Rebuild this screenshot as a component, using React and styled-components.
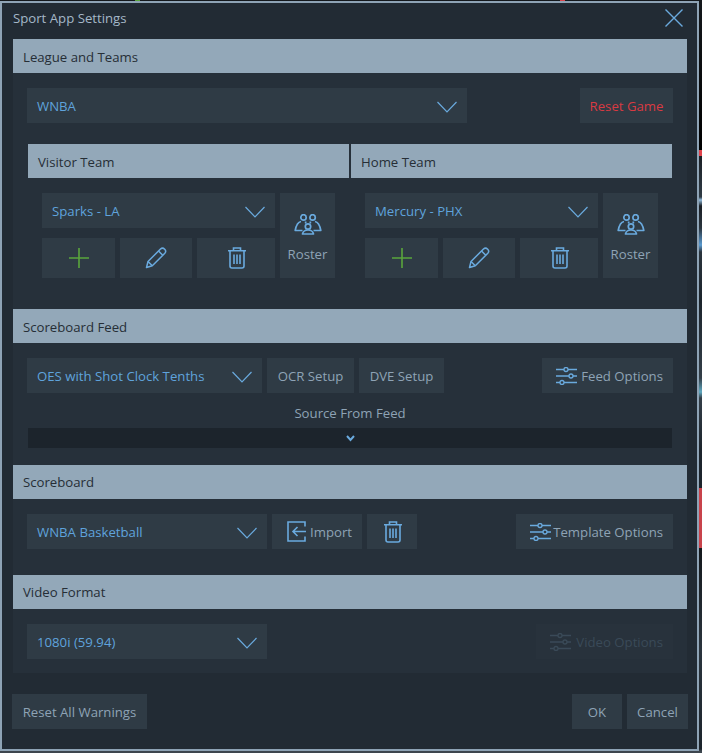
import styled, { createGlobalStyle } from "styled-components";

const GlobalStyle = createGlobalStyle`
  html, body { margin: 0; padding: 0; background: #1b2026; }
  * { box-sizing: border-box; }
`;

// the bits of desktop peeking out around the dialog
const Page = styled.div`
  width: 702px;
  height: 753px;
  overflow: hidden;
  padding-top: 1px;
  font-family: "Open Sans", "Liberation Sans", sans-serif;
  font-size: 13.2px;
  background:
    linear-gradient(
        to right,
        transparent 135px,
        #5aa63c 135px,
        #5aa63c 140px,
        transparent 140px,
        transparent 560px,
        #d9454c 560px,
        #d9454c 565px,
        transparent 565px
      )
      0 0 / 100% 1px no-repeat,
    linear-gradient(
      to bottom,
      #14181c 0,
      #000 150px,
      #e0434b 150px,
      #e0434b 156px,
      #1b2026 156px,
      #2f3b45 197px,
      #8fb8d8 200px,
      #1b2026 206px,
      #2a343d 228px,
      #5a9ad0 245px,
      #2a343d 252px,
      #1c242c 300px,
      #333e48 378px,
      #5fa8c0 392px,
      #333e48 398px,
      #1c242c 450px,
      #1c242c 488px,
      #c8434b 488px,
      #c8434b 548px,
      #14181c 548px,
      #2a343d 650px,
      #1c242c 749px,
      #3d464e 751px
    );
`;

const Dialog = styled.div`
  width: 699px;
  height: 750px;
  background: #222b34;
  border: 2px solid #8ea3b5;
  padding: 0 11px;
  display: flex;
  flex-direction: column;
`;

const TitleBar = styled.div`
  height: 36px;
  display: flex;
  justify-content: space-between;
  align-items: flex-start;
  color: #a5b8c8;
  padding: 6px 3px 0 0;
  line-height: 18px;
`;

const Panel = styled.div`
  width: 674px;
  background: #26303a;
`;

const SectionHeader = styled.div`
  height: 34px;
  background: #93a8b9;
  color: #262e36;
  display: flex;
  align-items: center;
  padding-left: 10px;
  padding-top: ${(p) => (p.$low ? 2 : 0)}px;
  flex: ${(p) => (p.$grow ? 1 : "none")};
`;

const Row = styled.div`
  display: flex;
  gap: 5px;
  height: 35px;
  margin: 15px 14px 0;
`;

const Spacer = styled.div`
  flex: 1;
`;

const SelectBox = styled.div`
  width: ${(p) => p.$w}px;
  height: 35px;
  background: #2f3b45;
  color: #5fa3dc;
  display: flex;
  align-items: center;
  justify-content: space-between;
  padding: 0 10px;
  flex: none;
`;

const Btn = styled.div`
  width: ${(p) => p.$w}px;
  height: ${(p) => p.$h || 35}px;
  background: ${(p) => (p.$off ? "#28323c" : "#2f3b45")};
  color: ${(p) => (p.$off ? "#3a4a58" : p.$red ? "#d93a42" : "#8ea3b5")};
  display: flex;
  align-items: center;
  justify-content: center;
  flex: none;
`;

const IconBtn = styled(Btn)`
  justify-content: space-between;
  padding: 0 10px 0 ${(p) => p.$left}px;
`;

const TeamHeaders = styled.div`
  display: flex;
  gap: 2px;
  margin: 21px 15px 0;
`;

const TeamRow = styled.div`
  display: flex;
  margin: 15px 15px 0;
  padding: 0 14px 31px;
  gap: 30px;
`;

const Team = styled.div`
  width: 293px;
  display: flex;
  gap: 5px;
`;

const TeamLeft = styled.div`
  width: 233px;
  display: flex;
  flex-direction: column;
  gap: 10px;
`;

const TeamButtons = styled.div`
  display: flex;
  gap: 5px;
`;

const RosterBtn = styled(Btn)`
  flex-direction: column;
  justify-content: flex-start;
  gap: 10px;
  padding-top: 21px;
`;

const SourceLabel = styled.div`
  color: #8ea3b5;
  text-align: center;
  margin-top: 11px;
  line-height: 18px;
`;

const SourceBar = styled.div`
  height: 20px;
  margin: 6px 15px 17px;
  background: #1c242c;
  display: flex;
  align-items: center;
  justify-content: center;
`;

const ScoreboardBody = styled.div`
  padding-bottom: 26px;
`;

const VideoBody = styled.div`
  padding-bottom: 14px;
`;

const Footer = styled.div`
  display: flex;
  gap: 5px;
  margin-top: 21px;
  margin-left: -1px;
  width: 676px;
`;

const Chevron = () => (
  <svg width="20" height="14" viewBox="0 0 20 14" fill="none" stroke="#6aaade" strokeWidth="1.2">
    <path d="M0.5 3 L10 13 L19.5 3" />
  </svg>
);

const Plus = () => (
  <svg width="20" height="20" viewBox="0 0 20 20" stroke="#5aa63c" strokeWidth="1.6">
    <path d="M0 10 H20 M10 0 V20" />
  </svg>
);

const Pencil = () => (
  <svg width="22" height="22" viewBox="0 0 22 22" fill="none" stroke="#6aaade" strokeWidth="1.5" strokeLinejoin="round">
    <path d="M1.5 20.5 L3 14.5 L15.5 2 C16.8 .8 18.3 .8 19.7 2.2 C21 3.6 21 5 19.8 6.3 L7.3 18.8 Z" />
    <path d="M13.5 4 L17.8 8.3 M3 14.5 L7.3 18.8" />
  </svg>
);

const Trash = () => (
  <svg width="20" height="22" viewBox="-2 0 20 22" fill="none" stroke="#6aaade" strokeWidth="1.6">
    <path d="M0 3.7 H18 M5.5 3.5 V1 H12.5 V3.5" />
    <path d="M2 4 V19 C2 20.3 2.8 21 4 21 H14 C15.2 21 16 20.3 16 19 V4" />
    <path d="M6 7.5 V17 M9 7.5 V17 M12 7.5 V17" />
  </svg>
);

const Group = () => (
  <svg width="28" height="21" viewBox="0 0 28 21" fill="none" stroke="#6aaade" strokeWidth="1.7" strokeLinejoin="round" style={{ flex: "none" }}>
    <circle cx="9.5" cy="3.4" r="2.7" />
    <circle cx="18.6" cy="3.4" r="2.7" />
    <circle cx="14" cy="12.5" r="2.7" />
    <path d="M7 7.5 C4 8 2.2 11 1.2 16.5 H8.5" />
    <path d="M21 7.5 C24 8 25.8 11 26.8 16.5 H19.5" />
    <path d="M8.5 20 C9 17.5 11 16 14 16 C17 16 19 17.5 19.5 20 Z" />
    <path d="M11.5 7.5 L11.8 9.5 M16.5 7.5 L16.2 9.5" />
  </svg>
);

const Sliders = ({ color = "#6aaade" }) => (
  <svg width="21" height="18" viewBox="0 0 21 18" fill="none" stroke={color} strokeWidth="1.3">
    <path d="M0 2.5 H8 M12 2.5 H21 M0 9 H13 M17 9 H21 M0 15.5 H4 M8 15.5 H21" />
    <circle cx="10" cy="2.5" r="2" />
    <circle cx="15" cy="9" r="2" />
    <circle cx="6" cy="15.5" r="2" />
  </svg>
);

const Import = () => (
  <svg width="19" height="21" viewBox="0 0 19 21" fill="none" stroke="#6aaade" strokeWidth="1.6">
    <path d="M18 5.5 V1 H1 V20 H18 V15.5" />
    <path d="M19 10.5 H6 M10.5 6 L6 10.5 L10.5 15" />
  </svg>
);

const Close = () => (
  <svg width="18" height="18" viewBox="0 0 18 18" stroke="#6aaade" strokeWidth="1.4">
    <path d="M0.5 0.5 L17.5 17.5 M17.5 0.5 L0.5 17.5" />
  </svg>
);

const SmallChevron = () => (
  <svg width="9" height="7" viewBox="0 0 9 7" fill="none" stroke="#6aaade" strokeWidth="2">
    <path d="M1 1 L4.5 5 L8 1" />
  </svg>
);

const TeamBlock = ({ name }) => (
  <Team>
    <TeamLeft>
      <SelectBox $w={233}>
        {name}
        <Chevron />
      </SelectBox>
      <TeamButtons>
        <Btn $w={73} $h={40}>
          <Plus />
        </Btn>
        <Btn $w={72} $h={40}>
          <Pencil />
        </Btn>
        <Btn $w={78} $h={40}>
          <Trash />
        </Btn>
      </TeamButtons>
    </TeamLeft>
    <RosterBtn $w={55} $h={85}>
      <Group />
      Roster
    </RosterBtn>
  </Team>
);

export default function App() {
  return (
    <Page>
      <GlobalStyle />
      <Dialog>
        <TitleBar>
          Sport App Settings
          <Close />
        </TitleBar>

        <Panel>
          <SectionHeader $low>League and Teams</SectionHeader>
          <Row>
            <SelectBox $w={440}>
              WNBA
              <Chevron />
            </SelectBox>
            <Spacer />
            <Btn $w={93} $red>
              Reset Game
            </Btn>
          </Row>
          <TeamHeaders>
            <SectionHeader $grow $low>
              Visitor Team
            </SectionHeader>
            <SectionHeader $grow $low>
              Home Team
            </SectionHeader>
          </TeamHeaders>
          <TeamRow>
            <TeamBlock name="Sparks - LA" />
            <TeamBlock name="Mercury - PHX" />
          </TeamRow>

          <SectionHeader $low>Scoreboard Feed</SectionHeader>
          <Row>
            <SelectBox $w={235}>
              OES with Shot Clock Tenths
              <Chevron />
            </SelectBox>
            <Btn $w={87}>OCR Setup</Btn>
            <Btn $w={85}>DVE Setup</Btn>
            <Spacer />
            <IconBtn $w={131} $left={14}>
              <Sliders />
              Feed Options
            </IconBtn>
          </Row>
          <SourceLabel>Source From Feed</SourceLabel>
          <SourceBar>
            <SmallChevron />
          </SourceBar>

          <SectionHeader>Scoreboard</SectionHeader>
          <ScoreboardBody>
            <Row>
              <SelectBox $w={240}>
                WNBA Basketball
                <Chevron />
              </SelectBox>
              <IconBtn $w={90} $left={15}>
                <Import />
                Import
              </IconBtn>
              <Btn $w={50}>
                <Trash />
              </Btn>
              <Spacer />
              <IconBtn $w={157} $left={14}>
                <Sliders />
                Template Options
              </IconBtn>
            </Row>
          </ScoreboardBody>

          <SectionHeader>Video Format</SectionHeader>
          <VideoBody>
            <Row>
              <SelectBox $w={240}>
                1080i (59.94)
                <Chevron />
              </SelectBox>
              <Spacer />
              <IconBtn $w={137} $left={14} $off>
                <Sliders color="#3a4a58" />
                Video Options
              </IconBtn>
            </Row>
          </VideoBody>
        </Panel>

        <Footer>
          <Btn $w={135}>Reset All Warnings</Btn>
          <Spacer />
          <Btn $w={50}>OK</Btn>
          <Btn $w={61}>Cancel</Btn>
        </Footer>
      </Dialog>
    </Page>
  );
}
